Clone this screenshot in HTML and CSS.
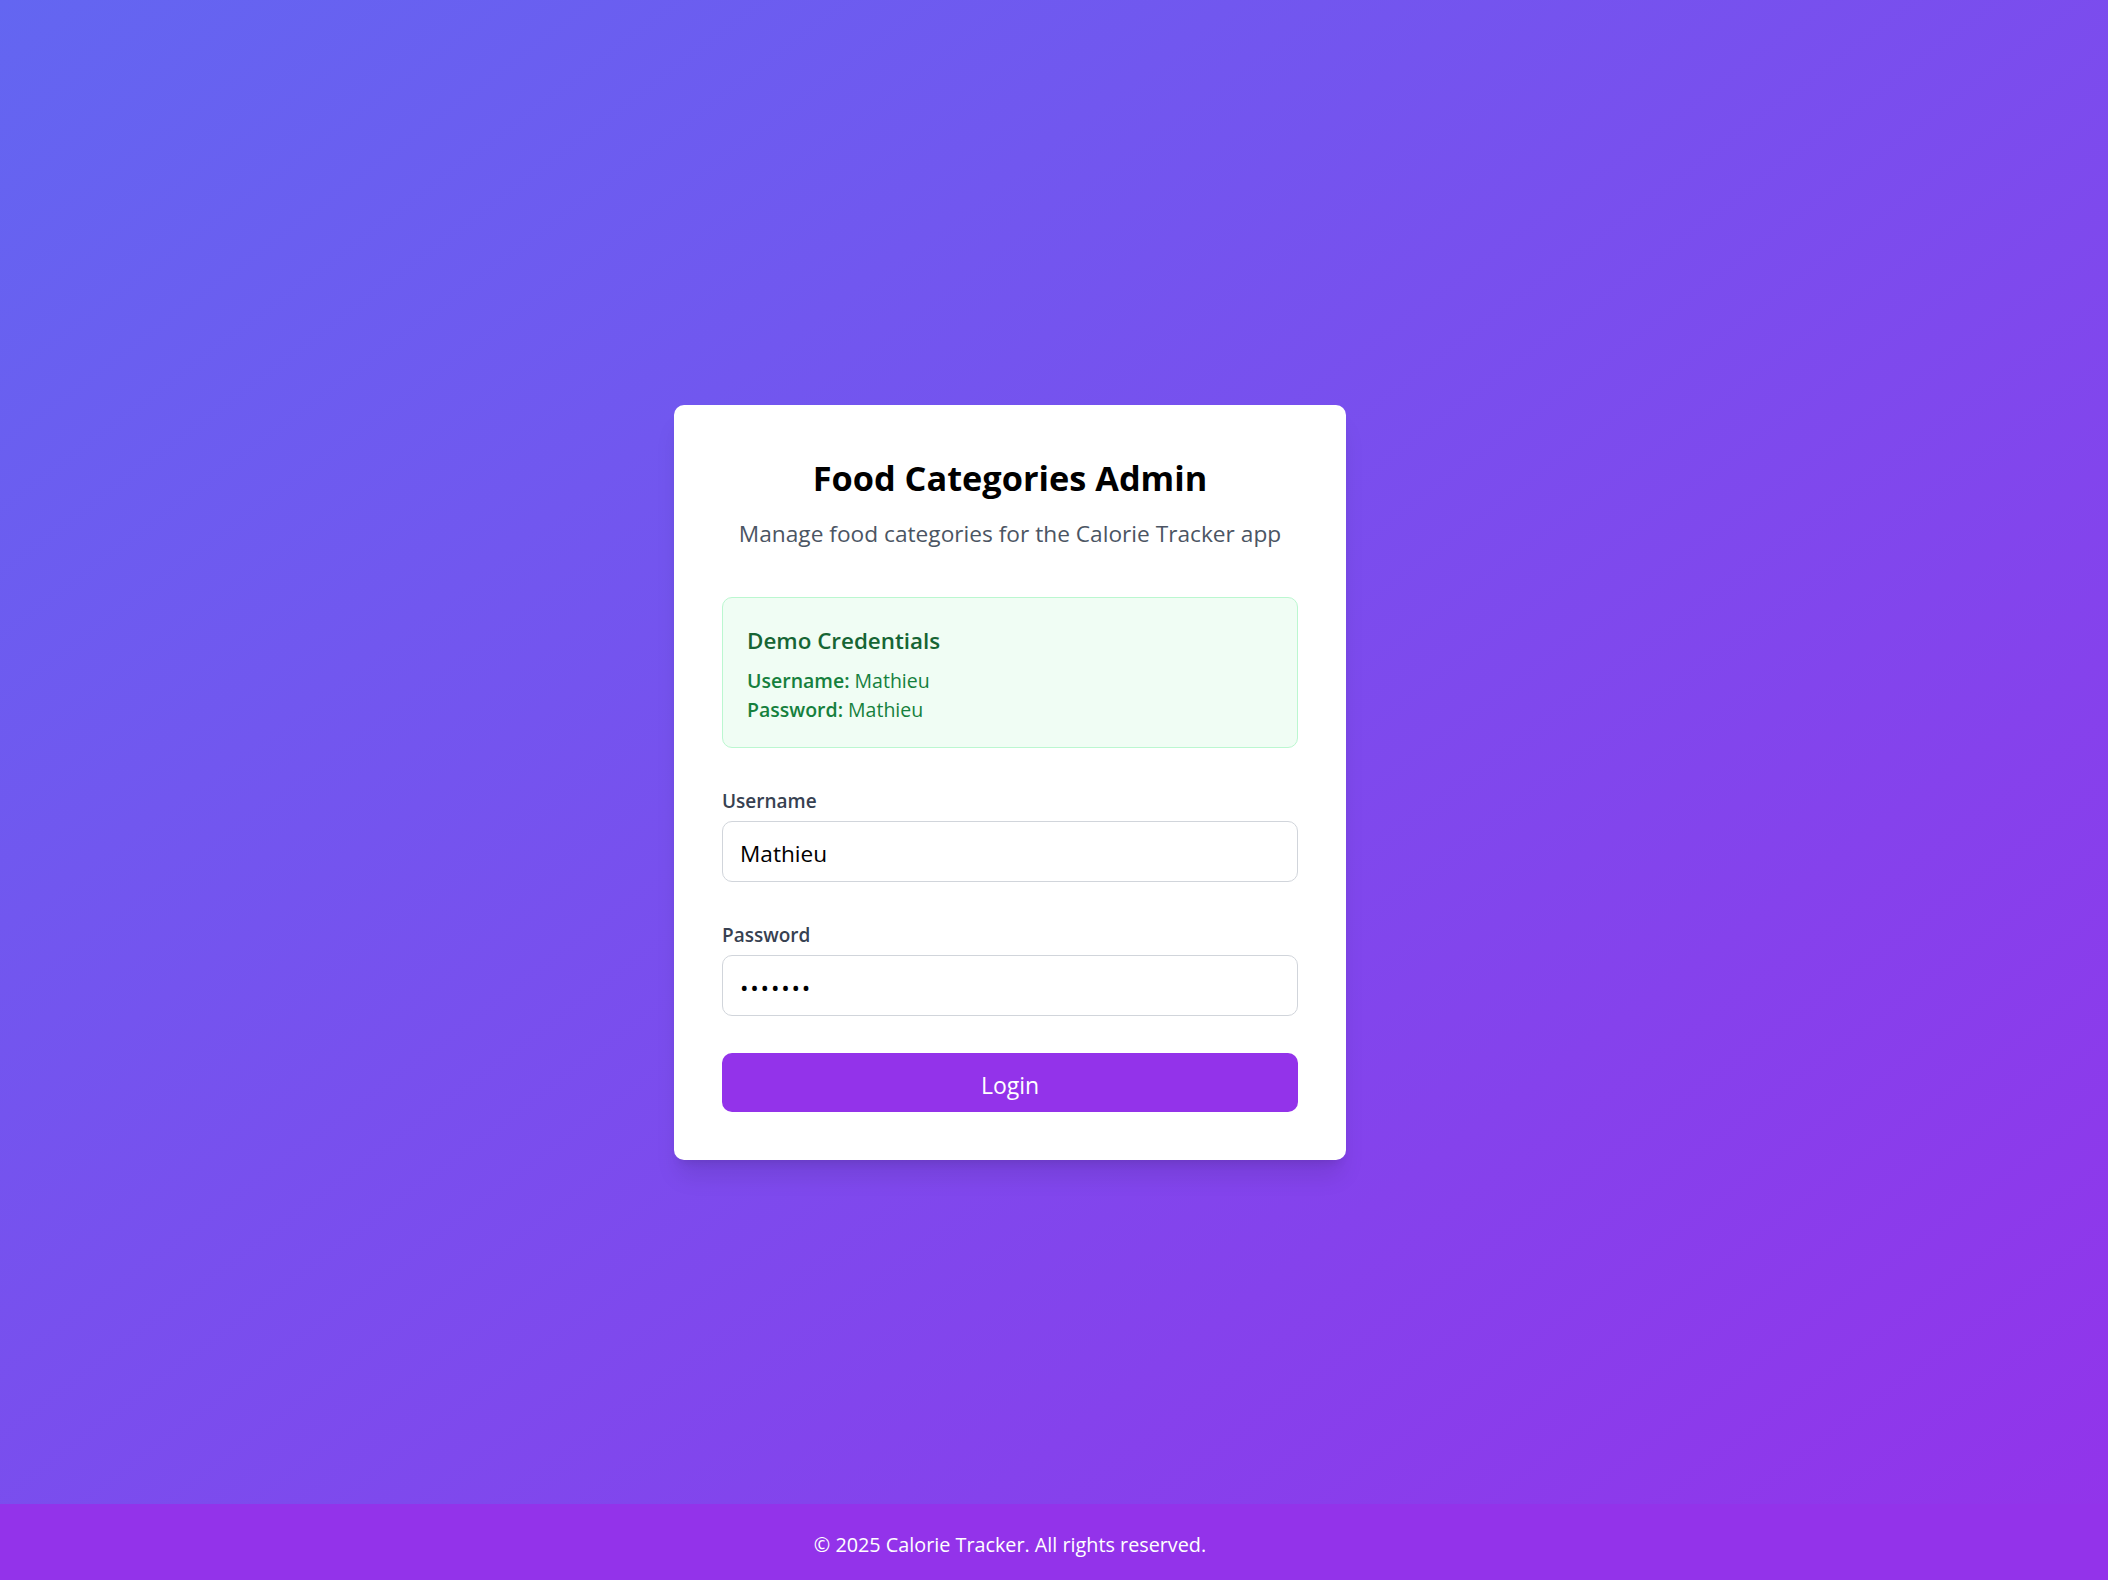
FILE: index.html
```html
<!DOCTYPE html>
<html lang="en">
<head>
<meta charset="utf-8">
<title>Food Categories Admin</title>
<link rel="stylesheet" href="styles.css">
</head>
<body>
<div class="page">
  <main class="main">
    <div class="card">
      <div class="header">
        <h1 class="title">Food Categories Admin</h1>
        <p class="subtitle">Manage food categories for the Calorie Tracker app</p>
      </div>
      <div class="demo">
        <h3 class="demo-title">Demo Credentials</h3>
        <div class="demo-lines">
          <p class="demo-line"><strong>Username:</strong> Mathieu</p>
          <p class="demo-line"><strong>Password:</strong> Mathieu</p>
        </div>
      </div>
      <form class="form">
        <div class="field">
          <label class="label" for="username">Username</label>
          <input class="input" id="username" type="text" value="Mathieu">
        </div>
        <div class="field">
          <label class="label" for="password">Password</label>
          <input class="input input-password" id="password" type="password" value="Mathieu">
        </div>
        <button class="btn" type="button">Login</button>
      </form>
    </div>
  </main>
  <footer class="footer">© 2025 Calorie Tracker. All rights reserved.</footer>
</div>
</body>
</html>
```

FILE: styles.css
```css
* {
  box-sizing: border-box;
  margin: 0;
  padding: 0;
}

html, body {
  min-height: 100%;
}

body {
  font-family: "Open Sans", "Noto Sans", sans-serif;
  background: linear-gradient(to bottom right, #6366f1 0%, #9333ea 100%);
  min-height: 100vh;
}

.page {
  display: flex;
  flex-direction: column;
  min-height: 100vh;
}

.main {
  flex: 1;
  display: flex;
  align-items: center;
  justify-content: center;
  padding: 61px 88px 0 0;
}

.card {
  width: 672px;
  background: #ffffff;
  border-radius: 10px;
  padding: 48px;
  box-shadow: 0 20px 25px -5px rgba(0, 0, 0, 0.1), 0 8px 10px -6px rgba(0, 0, 0, 0.1);
}

.title {
  font-size: 34.3px;
  font-weight: 700;
  line-height: 50px;
  text-align: center;
  color: #000000;
}

.subtitle {
  margin-top: 15.5px;
  font-size: 22.7px;
  line-height: 32px;
  color: #4b5563;
  text-align: center;
}

.demo {
  margin-top: 46.5px;
  background: #f0fdf4;
  border: 1px solid #bbf7d0;
  border-radius: 10px;
  padding: 27px 24px 22px;
}

.demo-title {
  font-size: 22.4px;
  font-weight: 600;
  line-height: 32px;
  color: #166534;
}

.demo-lines {
  margin-top: 9px;
}

.demo-line {
  font-size: 19.5px;
  line-height: 29.5px;
  color: #15803d;
}

.demo-line strong {
  font-weight: 600;
}

.form {
  margin-top: 38.5px;
  display: flex;
  flex-direction: column;
  gap: 37.3px;
}

.field {
  display: flex;
  flex-direction: column;
  gap: 4px;
}

.label {
  font-size: 19px;
  font-weight: 600;
  line-height: 31px;
  color: #374151;
}

.input {
  height: 61px;
  width: 100%;
  border: 1px solid #d1d5db;
  border-radius: 10px;
  padding: 4px 17px 0;
  font-family: inherit;
  font-size: 22.6px;
  color: #000000;
  background: #ffffff;
  outline: none;
}

.input-password {
  letter-spacing: 1.8px;
}

.btn {
  height: 59px;
  width: 100%;
  border: none;
  border-radius: 10px;
  background: #9333ea;
  color: #ffffff;
  font-family: inherit;
  font-size: 23px;
  padding-top: 4px;
  cursor: pointer;
}

.footer {
  height: 76px;
  background: #9333ea;
  color: #ffffff;
  text-align: center;
  font-size: 19.8px;
  line-height: 30px;
  padding: 26px 88px 20px 0;
}
```
